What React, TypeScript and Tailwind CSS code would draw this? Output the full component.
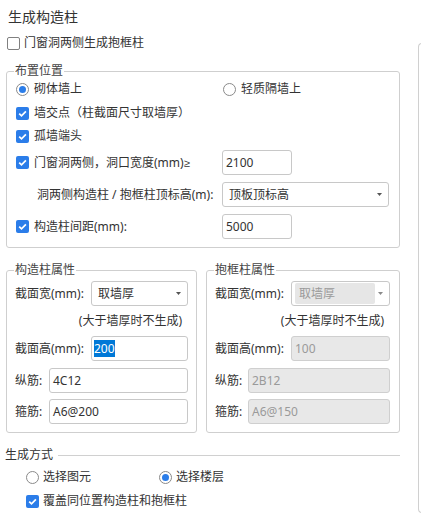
import React from 'react';

const CheckBox: React.FC<{ checked?: boolean }> = ({ checked }) =>
    checked ? (
        <span className="flex h-[13px] w-[13px] shrink-0 items-center justify-center rounded-[2px] bg-[#2b7de9]">
            <svg width="11" height="11" viewBox="0 0 11 11">
                <path d="M2.2 5.6 4.5 7.9 8.9 3.3" fill="none" stroke="#fff" strokeWidth="1.7" />
            </svg>
        </span>
    ) : (
        <span className="h-[13px] w-[13px] shrink-0 rounded-[2px] border border-[#808080] bg-white" />
    );

const Radio: React.FC<{ checked?: boolean }> = ({ checked }) => (
    <span className="flex h-[13px] w-[13px] shrink-0 items-center justify-center rounded-full border border-[#8a8a8a] bg-white">
        {checked && <span className="h-[7px] w-[7px] rounded-full bg-[#2b7de9]" />}
    </span>
);

const Arrow: React.FC<{ light?: boolean }> = ({ light }) => (
    <svg width="5" height="3" viewBox="0 0 5 3" className="shrink-0">
        <polygon points="0,0 5,0 2.5,3" fill={light ? '#8a8a8a' : '#555'} />
    </svg>
);

const Field: React.FC<{ value: React.ReactNode; disabled?: boolean; className?: string }> = ({ value, disabled, className = '' }) => (
    <div
        className={
            disabled
                ? `flex h-[25px] items-center rounded-[3px] border border-[#cfcfcf] bg-[#e8e8e8] pl-[3px] text-[#9a9a9a] ${className}`
                : `flex h-[25px] items-center rounded-[3px] border border-[#c8c8c8] bg-white pl-[3px] text-[#333] ${className}`
        }
    >
        {value}
    </div>
);

const Select: React.FC<{ value: string; className?: string }> = ({ value, className = '' }) => (
    <div className={`flex h-[25px] items-center justify-between rounded-[3px] border border-[#c8c8c8] bg-white pl-[6px] pr-[6px] text-[#333] ${className}`}>
        <span>{value}</span>
        <Arrow />
    </div>
);

export default function App() {
    return (
        <div className="flex h-[515px] w-[421px] overflow-hidden bg-white font-['Noto_Sans','Noto_Sans_CJK_SC',sans-serif] text-[12px] leading-[16px] text-[#333]">
            <div className="w-[418px] shrink-0 pl-[6px]">
                {/* header */}
                <div className="mt-[7px] h-[20px] pl-[2px] text-[14px] leading-[20px]">生成构造柱</div>
                <div className="mt-[6px] ml-[1px] flex h-[20px] items-center gap-[4px]">
                    <CheckBox />
                    <span>门窗洞两侧生成抱框柱</span>
                </div>

                {/* 布置位置 */}
                <fieldset className="mt-[10px] w-[394px] rounded-[3px] border border-[#cfcfcf]">
                    <legend className="ml-[7px] px-[1px] text-[#444]">布置位置</legend>
                    <div className="pl-[9px] pr-[10px] pb-[8px]">
                        <div className="flex h-[20px] items-center">
                            <div className="flex w-[206px] items-center gap-[5px]">
                                <Radio checked />
                                <span>砌体墙上</span>
                            </div>
                            <div className="ml-[1px] flex items-center gap-[5px]">
                                <Radio />
                                <span>轻质隔墙上</span>
                            </div>
                        </div>
                        <div className="mt-[4px] flex h-[20px] items-center gap-[5px]">
                            <CheckBox checked />
                            <span>墙交点（柱截面尺寸取墙厚）</span>
                        </div>
                        <div className="mt-[3px] flex h-[20px] items-center gap-[5px]">
                            <CheckBox checked />
                            <span>孤墙端头</span>
                        </div>
                        <div className="mt-[4px] flex h-[25px] items-center">
                            <div className="flex w-[206px] items-center gap-[5px]">
                                <CheckBox checked />
                                <span>
                                    门窗洞两侧，洞口宽度(mm)<span className="font-['Liberation_Sans',sans-serif] text-[11px]">≥</span>
                                </span>
                            </div>
                            <Field value="2100" className="w-[70px]" />
                        </div>
                        <div className="mt-[7px] flex h-[25px] items-center">
                            <span className="w-[206px] whitespace-nowrap pl-[21px]">洞两侧构造柱 / 抱框柱顶标高(m):</span>
                            <Select value="顶板顶标高" className="w-[167px]" />
                        </div>
                        <div className="mt-[7px] flex h-[25px] items-center">
                            <div className="flex w-[206px] items-center gap-[5px]">
                                <CheckBox checked />
                                <span>构造柱间距(mm):</span>
                            </div>
                            <Field value="5000" className="w-[70px]" />
                        </div>
                    </div>
                </fieldset>

                {/* attribute groups */}
                <div className="mt-[14px] flex w-[394px] gap-[9px]">
                    <fieldset className="w-[191px] shrink-0 rounded-[3px] border border-[#cfcfcf]">
                        <legend className="ml-[7px] px-[1px] text-[#444]">构造柱属性</legend>
                        <div className="px-[8px] pb-[8px]">
                            <div className="mt-[3px] flex h-[25px] items-center">
                                <span className="w-[76px] shrink-0">截面宽(mm):</span>
                                <Select value="取墙厚" className="flex-1" />
                            </div>
                            <div className="mt-[5px] flex h-[20px] items-center justify-end pr-[6px]">(大于墙厚时不生成)</div>
                            <div className="mt-[5px] flex h-[25px] items-center">
                                <span className="w-[76px] shrink-0">截面高(mm):</span>
                                <Field
                                    value={<span className="-ml-px bg-[#0078d7] leading-[17px] text-white">200</span>}
                                    className="flex-1"
                                />
                            </div>
                            <div className="mt-[7px] flex h-[25px] items-center">
                                <span className="w-[34px] shrink-0">纵筋:</span>
                                <Field value="4C12" className="flex-1" />
                            </div>
                            <div className="mt-[6px] flex h-[25px] items-center">
                                <span className="w-[34px] shrink-0">箍筋:</span>
                                <Field value="A6@200" className="flex-1" />
                            </div>
                        </div>
                    </fieldset>

                    <fieldset className="w-[194px] shrink-0 rounded-[3px] border border-[#cfcfcf]">
                        <legend className="ml-[7px] px-[1px] text-[#444]">抱框柱属性</legend>
                        <div className="pl-[8px] pr-[9px] pb-[8px]">
                            <div className="mt-[3px] flex h-[25px] items-center">
                                <span className="w-[76px] shrink-0">截面宽(mm):</span>
                                <div className="flex h-[25px] flex-1 items-center justify-between rounded-[3px] border border-[#c8c8c8] bg-white pl-[3px] pr-[6px]">
                                    <div className="flex h-[21px] w-[80px] items-center rounded-[2px] bg-[#e6e6e6] pl-[4px] text-[#9a9a9a]">取墙厚</div>
                                    <Arrow light />
                                </div>
                            </div>
                            <div className="mt-[5px] flex h-[20px] items-center justify-end pr-[6px]">(大于墙厚时不生成)</div>
                            <div className="mt-[5px] flex h-[25px] items-center">
                                <span className="w-[76px] shrink-0">截面高(mm):</span>
                                <Field value="100" disabled className="flex-1" />
                            </div>
                            <div className="mt-[7px] flex h-[25px] items-center">
                                <span className="w-[33px] shrink-0">纵筋:</span>
                                <Field value="2B12" disabled className="flex-1" />
                            </div>
                            <div className="mt-[6px] flex h-[25px] items-center">
                                <span className="w-[33px] shrink-0">箍筋:</span>
                                <Field value="A6@150" disabled className="flex-1" />
                            </div>
                        </div>
                    </fieldset>
                </div>

                {/* 生成方式 */}
                <div className="mt-[12px] -ml-px flex h-[20px] w-[395px] items-center gap-[5px]">
                    <span>生成方式</span>
                    <span className="h-px flex-1 bg-[#d0d0d0]" />
                </div>
                <div className="mt-[2px] flex h-[20px] items-center pl-[20px]">
                    <div className="flex w-[133px] items-center gap-[4px]">
                        <Radio />
                        <span>选择图元</span>
                    </div>
                    <div className="flex items-center gap-[4px]">
                        <Radio checked />
                        <span>选择楼层</span>
                    </div>
                </div>
                <div className="mt-[4px] flex h-[20px] items-center gap-[4px] pl-[20px]">
                    <CheckBox checked />
                    <span>覆盖同位置构造柱和抱框柱</span>
                </div>
            </div>

            {/* neighbouring panel edge */}
            <div className="mt-[43px] h-[470px] w-[10px] shrink-0 rounded-l-[4px] border-y border-l border-[#d0d0d0]" />
        </div>
    );
}
